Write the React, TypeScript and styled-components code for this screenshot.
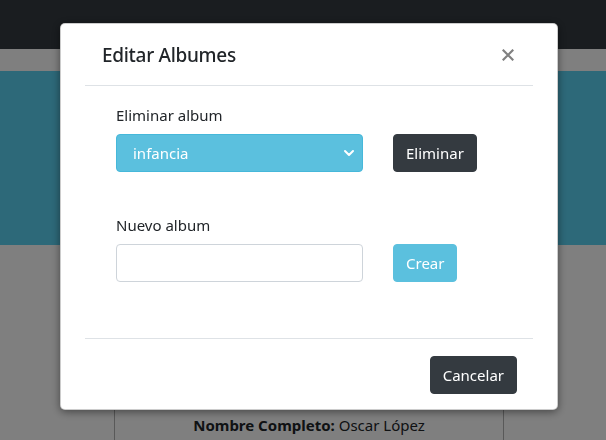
import React from "react";
import styled, { createGlobalStyle } from "styled-components";

const Global = createGlobalStyle`
  html, body { margin: 0; padding: 0; }
  body {
    font-family: "Noto Sans", "Open Sans", sans-serif;
    font-size: 16px;
    line-height: 1.5;
    color: #212529;
    background: #fff;
    overflow: hidden;
  }
  * { box-sizing: border-box; }
`;

const Page = styled.div`
  width: 606px;
  height: 440px;
  display: flex;
  flex-direction: column;
`;

const Navbar = styled.div`
  height: 49px;
  background: #343a40;
`;

const Strip = styled.div`
  height: 22px;
  background: #fff;
`;

const Jumbo = styled.div`
  height: 174px;
  background: #5bd2f2;
`;

const Content = styled.div`
  flex: 1;
  display: flex;
  justify-content: center;
  padding-left: 114px;
  padding-right: 102px;
`;

const Card = styled.div`
  flex: 1;
  border-left: 1px solid rgba(0, 0, 0, 0.3);
  border-right: 1px solid rgba(0, 0, 0, 0.3);
  display: flex;
  align-items: flex-end;
  justify-content: center;
  padding-bottom: 4px;
`;

const Info = styled.p`
  margin: 0;
  font-size: 15px;
  color: #212529;
  b { font-weight: 700; }
`;

const Backdrop = styled.div`
  position: fixed;
  inset: 0;
  background: rgba(0, 0, 0, 0.5);
`;

const Modal = styled.div`
  position: fixed;
  top: 23px;
  left: 60px;
  width: 498px;
  background: #fff;
  border: 1px solid rgba(0, 0, 0, 0.2);
  border-radius: 5px;
  box-shadow: 0 2px 8px rgba(0, 0, 0, 0.45);
  display: flex;
  flex-direction: column;
`;

const Header = styled.div`
  margin: 0 24px;
  padding: 16px 18px 15px 17px;
  border-bottom: 1px solid #dee2e6;
  display: flex;
  align-items: center;
  justify-content: space-between;
`;

const Title = styled.h5`
  margin: 0;
  font-size: 19px;
  letter-spacing: -0.3px;
  font-weight: 500;
  line-height: 30px;
  color: #212529;
`;

const Close = styled.button`
  border: 0;
  background: transparent;
  padding: 0;
  margin: 0;
  width: 14px;
  height: 14px;
  display: flex;
  align-items: center;
  justify-content: center;
  cursor: pointer;
`;

const Body = styled.div`
  padding: 17px 0 56px 55px;
  display: grid;
  grid-template-columns: 247px auto;
  column-gap: 30px;
  align-items: center;
`;

const Label = styled.label<{ $first?: boolean }>`
  grid-column: 1 / span 2;
  font-size: 15px;
  line-height: 24px;
  margin-top: ${(p) => (p.$first ? "0" : "41px")};
  margin-bottom: 7px;
  color: #212529;
`;

const SelectBox = styled.div`
  height: 38px;
  background: #5bc0de;
  border: 1px solid #46b8da;
  border-radius: 4px;
  color: #fff;
  font-size: 15px;
  display: flex;
  align-items: center;
  justify-content: space-between;
  padding: 0 7px 0 16px;
`;

const Input = styled.div`
  height: 38px;
  border: 1px solid #ced4da;
  border-radius: 4px;
  background: #fff;
`;

const ButtonRow = styled.div`
  display: flex;
`;

const Btn = styled.button<{ $variant: "dark" | "info" }>`
  height: 38px;
  padding: 0 12px;
  border-radius: 4px;
  border: 1px solid ${(p) => (p.$variant === "dark" ? "#343a40" : "#5bc0de")};
  background: ${(p) => (p.$variant === "dark" ? "#343a40" : "#5bc0de")};
  color: #fff;
  font-family: "Noto Sans", "Open Sans", sans-serif;
  font-size: 15px;
  line-height: 24px;
  cursor: pointer;
`;

const Footer = styled.div`
  margin: 0 24px;
  padding: 17px 16px 15px;
  border-top: 1px solid #dee2e6;
  display: flex;
  justify-content: flex-end;
`;

export default function App() {
  return (
    <>
      <Global />
      <Page>
        <Navbar />
        <Strip />
        <Jumbo />
        <Content>
          <Card>
            <Info>
              <b>Nombre Completo:</b> Oscar López
            </Info>
          </Card>
        </Content>
      </Page>
      <Backdrop />
      <Modal>
        <Header>
          <Title>Editar Albumes</Title>
          <Close aria-label="Cerrar">
            <svg width="12" height="12" viewBox="0 0 12 12">
              <path d="M1.5 1.5 L10.5 10.5 M10.5 1.5 L1.5 10.5" stroke="#808080" strokeWidth="2.2" strokeLinecap="square" />
            </svg>
          </Close>
        </Header>
        <Body>
          <Label $first>Eliminar album</Label>
          <SelectBox>
            <span>infancia</span>
            <svg width="12" height="8" viewBox="0 0 12 8">
              <path d="M2 2 L6 6 L10 2" fill="none" stroke="#fff" strokeWidth="2" strokeLinecap="round" strokeLinejoin="round" />
            </svg>
          </SelectBox>
          <ButtonRow>
            <Btn $variant="dark">Eliminar</Btn>
          </ButtonRow>
          <Label>Nuevo album</Label>
          <Input />
          <ButtonRow>
            <Btn $variant="info">Crear</Btn>
          </ButtonRow>
        </Body>
        <Footer>
          <Btn $variant="dark">Cancelar</Btn>
        </Footer>
      </Modal>
    </>
  );
}
